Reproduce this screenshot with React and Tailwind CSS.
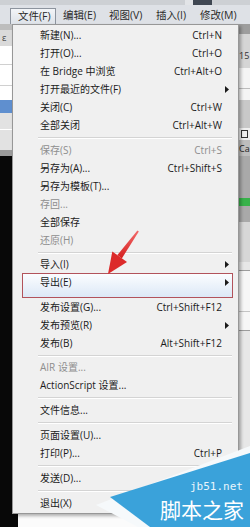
import React from "react";

const menubar = [
  { label: "文件(F)", w: "w-[46px]", active: true },
  { label: "编辑(E)", w: "w-[46px]" },
  { label: "视图(V)", w: "w-[47px]" },
  { label: "插入(I)", w: "w-[44px]" },
  { label: "修改(M)", w: "w-[47px]" },
];

const items = [
  { label: "新建(N)...", keys: "Ctrl+N" },
  { label: "打开(O)...", keys: "Ctrl+O" },
  { label: "在 Bridge 中浏览", keys: "Ctrl+Alt+O" },
  { label: "打开最近的文件(F)", sub: true },
  { label: "关闭(C)", keys: "Ctrl+W" },
  { label: "全部关闭", keys: "Ctrl+Alt+W" },
  { sep: "h-[7px]" },
  { label: "保存(S)", keys: "Ctrl+S", off: true },
  { label: "另存为(A)...", keys: "Ctrl+Shift+S" },
  { label: "另存为模板(T)..." },
  { label: "存回...", off: true },
  { label: "全部保存" },
  { label: "还原(H)", off: true },
  { sep: "h-[6px]" },
  { label: "导入(I)", sub: true },
  { label: "导出(E)", sub: true },
  { sep: "h-[7px]" },
  { label: "发布设置(G)...", keys: "Ctrl+Shift+F12" },
  { label: "发布预览(R)", sub: true },
  { label: "发布(B)", keys: "Alt+Shift+F12" },
  { sep: "h-[6px]" },
  { label: "AIR 设置...", off: true },
  { label: "ActionScript 设置..." },
  { sep: "h-[7px]" },
  { label: "文件信息..." },
  { sep: "h-[7px]" },
  { label: "页面设置(U)..." },
  { label: "打印(P)...", keys: "Ctrl+P" },
  { sep: "h-[7px]" },
  { label: "发送(D)..." },
  { sep: "h-[7px]" },
  { label: "退出(X)" },
];

// small black submenu pointer
const SubArrow = () => (
  <svg width="4" height="7" viewBox="0 0 4 7">
    <path d="M0 0L4 3.5L0 7Z" fill="#1b1b1b" />
  </svg>
);

const MenuRow = ({ item }) => {
  if (item.sep) {
    return (
      <div className={`${item.sep} pt-[3px] pl-[25px] pr-[6px]`}>
        <div className="border-t border-b border-t-[#d4d4d4] border-b-white" />
      </div>
    );
  }
  const color = item.off ? "text-[#8e8e8e]" : "text-[#1b1b1b]";
  return (
    <div className={`relative flex h-[18px] items-center pl-[27px] pr-[9px] ${color}`}>
      <span className="flex-1 whitespace-nowrap">{item.label}</span>
      {item.keys && <span className="whitespace-nowrap">{item.keys}</span>}
      <span className="flex w-[7px] justify-end">{item.sub && <SubArrow />}</span>
    </div>
  );
};

const LeftStrip = () => (
  <div className="flex w-[18px] flex-col">
    <div className="h-[6px] bg-[#bdbdbd]" />
    <div className="flex h-[16px] items-center bg-[#dadada] pl-[2px] text-[9px] text-[#444]">ε</div>
    <div className="h-[54px] bg-white">
      <div className="mt-[18px] border-t border-[#d0d0d0]" />
      <div className="mt-[20px] border-t border-[#d0d0d0]" />
    </div>
    <div className="h-[13px] bg-[#5f8fcf]" />
    <div className="h-[37px] bg-[#e2e2e2]">
      <div className="mt-[16px] border-t border-white" />
    </div>
    <div className="h-[6px] bg-[#9a9a9a]" />
    <div className="flex-1 bg-[#080808]" />
  </div>
);

const RightStrip = () => (
  <div className="flex w-[11px] flex-col">
    <div className="h-[10px] bg-[#9d9d9d]" />
    <div className="flex h-[34px] items-end bg-[#d5d5d5] pb-[8px] text-[9px] leading-none text-[#333]">15</div>
    <div className="h-[32px] bg-[#f4f4f4]">
      <div className="mt-[20px] border-t border-[#bcbcbc]" />
    </div>
    <div className="h-[28px] bg-[#c8c8c8]" />
    <div className="flex h-[12px] items-center bg-[#efefef] pl-[2px]">
      <div className="h-[8px] w-[7px] border border-[#333]" />
    </div>
    <div className="flex h-[16px] items-center bg-[#bdbdbd] text-[9px] leading-none text-[#222]">Ca</div>
    <div className="h-[42px] bg-[#a9a9a9]" />
    <div className="h-[8px] bg-[#37b24a]" />
    <div className="h-[16px] bg-[#a9a9a9]" />
    <div className="h-[40px] bg-[#d7d7d7]" />
    <div className="flex-1 bg-[#e7e7e7]" />
  </div>
);

export default function App() {
  return (
    <div className="relative flex h-[527px] w-[250px] flex-col overflow-hidden bg-[#e8e8e8] [font-family:'Open_Sans','Noto_Sans_CJK_SC',sans-serif]">
      {/* window title strip */}
      <div className="flex h-[5px] bg-[#cdd0d4]">
        <div className="w-[185px]" />
        <div className="w-[8px] bg-[#e2e4e7]" />
        <div className="w-[19px] bg-[#3f4752]" />
      </div>

      {/* menu bar */}
      <div className="flex h-[19px] items-end bg-[#dee1e6] pl-[10px] text-[10.5px] text-[#2a2a2a]">
        {menubar.map((m) => (
          <div
            key={m.label}
            className={`flex h-[16px] items-center whitespace-nowrap pl-[7px] ${m.w} ${
              m.active ? "border border-b-0 border-[#8d949e] bg-linear-to-b from-[#f3f5f8] to-[#dde2e8] pl-[6px]" : ""
            }`}>
            {m.label}
          </div>
        ))}
      </div>

      {/* application behind the menu */}
      <div className="flex flex-1">
        <LeftStrip />
        <div className="flex-1 bg-[#fbfbfb]" />
        <RightStrip />
      </div>

      {/* open submenu peeking out on the right */}
      <div className="absolute left-[236px] top-[270px] h-[61px] w-[20px] border border-[#9c9c9c] bg-[#f6f6f6]">
        <div className="mt-[40px] border-t border-[#c4c4c4]" />
      </div>

      {/* File dropdown */}
      <div className="absolute left-[12px] top-[24px] w-[227px] border border-[#979797] bg-[#f0f0f0] py-[1px] text-[10px] shadow-[2px_2px_3px_rgba(0,0,0,0.3)]">
        <div className="absolute left-[9px] top-[248px] h-[25px] w-[211px] border border-[#b2535b] bg-linear-to-b from-[#fbfdff] to-[#dce8f6]" />
        {items.map((it, i) => (
          <MenuRow key={i} item={it} />
        ))}
      </div>

      {/* red pointer arrow */}
      <svg className="pointer-events-none absolute left-0 top-0" width="250" height="527">
        <defs>
          <linearGradient id="arr" x1="0" y1="0" x2="0" y2="1">
            <stop offset="0" stopColor="#f26a6a" />
            <stop offset="1" stopColor="#d51f1f" />
          </linearGradient>
        </defs>
        <polygon points="137.4,230.6 138.8,231.6 121.8,258.4 117.4,255" fill="url(#arr)" />
        <polygon points="108,274 112.3,251.5 127,262" fill="#dc2a2a" />
      </svg>

      {/* site watermark */}
      <svg className="pointer-events-none absolute left-0 top-0" width="250" height="527">
        <polygon points="96,505 250,446 250,527 138,527" fill="#f6f9fb" />
        <polygon points="110,497 250,453 250,527 150,527" fill="#3aa2da" />
      </svg>
      <div className="absolute left-[190px] top-[481px] text-[11px] leading-none text-[#e9f5fc] [font-family:'DejaVu_Sans_Mono',monospace]">
        jb51.net
      </div>
      <div className="absolute left-[160px] top-[499px] text-[21px] leading-none text-white [font-family:'Noto_Sans_CJK_SC',sans-serif]">
        脚本之家
      </div>
    </div>
  );
}
